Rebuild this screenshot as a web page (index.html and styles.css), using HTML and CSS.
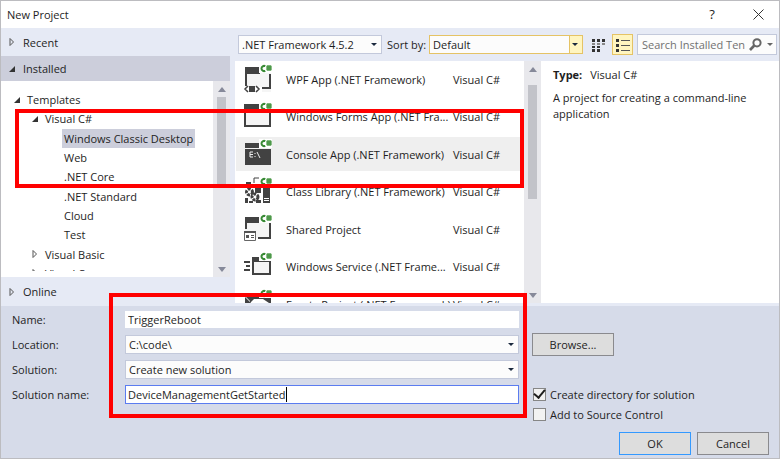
FILE: index.html
```html
<!DOCTYPE html>
<html lang="en">
<head>
<meta charset="utf-8">
<meta name="viewport" content="width=device-width, initial-scale=1">
<title>New Project</title>
<link rel="stylesheet" href="styles.css">
</head>
<body>
<svg class="defs" aria-hidden="true">
  <symbol id="cs" viewBox="0 0 13 9">
    <path d="M0 0H13V9H0Z" fill="#fff"/>
    <path d="M6.300 2.200A2.600 2.600 0 1 0 6.300 6.800" fill="none" stroke="#388a34" stroke-width="2"/>
    <path d="M7.500 1.500H12.500V6.500H7.500Z" fill="#8cc489"/>
    <path d="M9 1V7M11 1V7M7.200 3H12.800M7.200 5H12.800" fill="none" stroke="#388a34"/>
  </symbol>
</svg>
<main class="dialog">
  <header class="titlebar">
    <h1>New Project</h1>
    <button class="title-btn" aria-label="Help">?</button>
    <button class="title-btn" aria-label="Close"><svg width="11" height="11" viewBox="0 0 11 11"><path d="M.5 .5L10.5 10.5M10.5 .5L.5 10.5" stroke="#333" fill="none"/></svg></button>
  </header>

  <div class="browser">
    <nav class="sidebar">
      <button class="section"><svg class="tri" viewBox="0 0 8 8"><path d="M2 .5V7.5L5.5 4Z" fill="none" stroke="#555"/></svg>Recent</button>
      <button class="section current"><svg class="tri" viewBox="0 0 8 8"><path d="M7 1V7H1Z" fill="#333"/></svg>Installed</button>
      <div class="tree-pane">
        <div class="tree-clip">
          <ul class="tree">
            <li class="l0"><svg class="tri" viewBox="0 0 8 8"><path d="M7 1V7H1Z" fill="#333"/></svg><span>Templates</span></li>
            <li class="l1"><svg class="tri" viewBox="0 0 8 8"><path d="M7 1V7H1Z" fill="#333"/></svg><span>Visual C#</span></li>
            <li class="l2"><span class="picked">Windows Classic Desktop</span></li>
            <li class="l2"><span>Web</span></li>
            <li class="l2"><span>.NET Core</span></li>
            <li class="l2"><span>.NET Standard</span></li>
            <li class="l2"><span>Cloud</span></li>
            <li class="l2"><span>Test</span></li>
            <li class="l1"><svg class="tri" viewBox="0 0 8 8"><path d="M2 .5V7.5L5.5 4Z" fill="none" stroke="#555"/></svg><span>Visual Basic</span></li>
            <li class="l1"><svg class="tri" viewBox="0 0 8 8"><path d="M2 .5V7.5L5.5 4Z" fill="none" stroke="#555"/></svg><span>Visual C++</span></li>
          </ul>
        </div>
        <div class="scroll tree-scroll"><i class="up"></i><i class="thumb"></i><i class="down"></i></div>
      </div>
      <button class="section online"><svg class="tri" viewBox="0 0 8 8"><path d="M2 .5V7.5L5.5 4Z" fill="none" stroke="#555"/></svg>Online</button>
    </nav>

    <section class="content">
      <div class="toolbar">
        <span class="select framework"><select aria-label="Framework"><option>.NET Framework 4.5.2</option></select></span>
        <label for="sort">Sort by:</label>
        <span class="select sort"><select id="sort"><option>Default</option></select></span>
        <button class="view" aria-label="Small icons"><svg width="14" height="14" viewBox="0 0 14 14" fill="#333"><path d="M0 1H3V4H0ZM5 1H8V4H5ZM10 1H13V4H10ZM0 8H3V10H0ZM5 8H8V10H5ZM0 11H3V14H0ZM5 11H8V14H5Z"/><path d="M0 5H3V7H0ZM5 5H8V7H5ZM10 5H13V7H10Z" fill="#888"/></svg></button>
        <button class="view on" aria-label="List"><svg width="14" height="14" viewBox="0 0 14 14" fill="#333"><path d="M0 1H3V4H0ZM0 6H3V9H0ZM0 11H3V14H0Z"/><path d="M5 2H14V3H5ZM5 7H14V8H5ZM5 12H14V13H5Z" fill="#555"/></svg></button>
        <div class="search"><input type="text" aria-label="Search" placeholder="Search Installed Ten"><svg width="13" height="13" viewBox="0 0 13 13" fill="none" stroke="#666"><circle cx="8" cy="4.8" r="3.6" stroke-width="2"/><path d="M5.3 7.5L1 12" stroke-width="2.6"/></svg><i class="caret"></i></div>
      </div>
      <div class="panes">
        <div class="list-pane">
          <ul class="templates">
            <li><svg class="icon" viewBox="0 0 30 34"><path d="M2 5H28V30H2Z" fill="#f5f5f5"/><path d="M2 5H17V12H28V27H18V25H26V12H4V24H2Z" fill="#424242"/><path d="M1 25H19V31H1Z" fill="#fff"/><path d="M5 24L2 27L5 30M13 24L16 27L13 30" fill="none" stroke="#424242" stroke-width="1.5"/><path d="M6 24H12V30H6Z" fill="#424242"/><use href="#cs" x="16" y="2" width="13" height="9"/></svg><span>WPF App (.NET Framework)</span><em>Visual C#</em></li>
            <li><svg class="icon" viewBox="0 0 30 34"><path d="M2 4H28V26H2Z" fill="#f5f5f5"/><path d="M1 4H28V27H1ZM3 11V25H26V11Z" fill="#424242" fill-rule="evenodd"/><use href="#cs" x="16" y="2" width="13" height="9"/></svg><span>Windows Forms App (.NET Fra...</span><em>Visual C#</em></li>
            <li class="active"><svg class="icon" viewBox="0 0 30 34"><path d="M2 6H28V11H2ZM2 12H28V28H2Z" fill="#424242"/><path d="M10 15H7V20H10M7 17.5H10M12 16V17M12 19V20M14 15L17 21" fill="none" stroke="#eee"/><use href="#cs" x="16" y="2" width="13" height="9"/></svg><span>Console App (.NET Framework)</span><em>Visual C#</em></li>
            <li><svg class="icon" viewBox="0 0 30 34"><path d="M3 7H8V10H3ZM20 10H27V28H20ZM12 9H18V18H12Z" fill="#424242"/><path d="M11 8V3H16" fill="none" stroke="#424242"/><path d="M2 23H5V28H2ZM13 25H18V28H13Z" fill="#424242"/><path d="M21 23H26V24H21ZM21 25H26V26H21Z" fill="#fff"/><circle cx="6.500" cy="17" r="3" fill="none" stroke="#424242" stroke-width="3" stroke-dasharray="3 1"/><circle cx="12" cy="22" r="3" fill="#fff" stroke="#424242" stroke-width="3" stroke-dasharray="3 1"/><path d="M6 27H10" stroke="#424242" stroke-width="2"/><use href="#cs" x="16" y="2" width="13" height="9"/></svg><span>Class Library (.NET Framework)</span><em>Visual C#</em></li>
            <li><svg class="icon" viewBox="0 0 30 34"><path d="M2 5H28V26H2Z" fill="#f5f5f5"/><path d="M2 5H17V11H28V27H15V25H26V11H4V17H2Z" fill="#424242"/><path d="M1.500 19.500H12.500V28.500H1.500Z" fill="#fff" stroke="#666"/><path d="M1 19H13V21H1ZM3 23H6V26H3Z" fill="#555"/><path d="M8 23.500H11M8 25.500H11" stroke="#555"/><use href="#cs" x="16" y="2" width="13" height="9"/></svg><span>Shared Project</span><em>Visual C#</em></li>
            <li><svg class="icon" viewBox="0 0 30 34"><path d="M9 7H28V25H9Z" fill="#424242"/><path d="M11 12H26V23H11Z" fill="#f5f5f5"/><path d="M1 11H7V13H1ZM3 15H7V17H3ZM1 19H7V21H1Z" fill="#424242"/><use href="#cs" x="16" y="2" width="13" height="9"/></svg><span>Windows Service (.NET Frame...</span><em>Visual C#</em></li>
            <li><svg class="icon" viewBox="0 0 30 34"><path d="M3 6H17V11H28V28H26V16L20 12H11L7 16V14L3 10Z" fill="#424242"/><path d="M2 10L8 16H2Z" fill="#424242"/><use href="#cs" x="16" y="2" width="13" height="9"/></svg><span>Empty Project (.NET Framework)</span><em>Visual C#</em></li>
          </ul>
          <div class="scroll list-scroll"><i class="up"></i><i class="thumb"></i><i class="down"></i></div>
        </div>
        <aside class="details">
          <p><b>Type:</b>Visual C#</p>
          <p>A project for creating a command-line application</p>
        </aside>
      </div>
    </section>
    <div class="highlight first"></div>
  </div>

  <form class="form">
    <div class="fields">
      <label for="name">Name:</label><input class="plain" id="name" type="text" value="TriggerReboot">
      <label for="loc">Location:</label><span class="select"><select id="loc"><option>C:\code\</option></select></span>
      <label for="sol">Solution:</label><span class="select"><select id="sol"><option>Create new solution</option></select></span>
      <label for="solname">Solution name:</label><span class="focused"><input id="solname" type="text" value="DeviceManagementGetStarted"><i class="cursor"></i></span>
    </div>
    <div class="side">
      <button type="button" class="btn browse">Browse...</button>
      <label class="check"><input type="checkbox" checked>Create directory for solution</label>
      <label class="check"><input type="checkbox">Add to Source Control</label>
    </div>
    <div class="actions">
      <button type="button" class="btn ok">OK</button>
      <button type="button" class="btn">Cancel</button>
    </div>
    <div class="highlight second"></div>
  </form>
</main>
</body>
</html>
```

FILE: styles.css
```css
* { box-sizing: border-box; }
body {
  margin: 0;
  font: 11px/17px "Open Sans", "Noto Sans", sans-serif;
  color: #1e1e1e;
}
button, input, select { font: inherit; color: inherit; margin: 0; padding: 0; border: 0; border-radius: 0; background: none; }
ul, h1, p { margin: 0; padding: 0; list-style: none; }
em { font-style: normal; }
.defs { position: absolute; width: 0; height: 0; }

.dialog {
  min-height: 100vh;
  display: flex;
  flex-direction: column;
  border: 1px solid #bcbcc0;
  background: #d6dbe9;
}
.titlebar { display: flex; align-items: center; height: 27px; padding: 0 15px 0 6px; background: #fff; }
.titlebar h1 { flex: 1; font-size: 11px; font-weight: 400; }
.title-btn { width: 12px; margin-left: 34px; font-size: 13px; display: flex; justify-content: center; }

.browser { position: relative; display: flex; gap: 5px; height: 278px; background: #e6eaf5; }
.sidebar { width: 229px; display: flex; flex-direction: column; }
.section { display: flex; align-items: center; gap: 7px; height: 28px; padding: 0 7px; text-align: left; }
.section.current { height: 25px; background: #cccedb; }
.section.online { height: 29px; }
.tri { width: 8px; height: 8px; flex: none; }
.tree-pane { flex: 1; display: flex; background: #fff; }
.tree-clip { flex: 1; height: 190px; overflow: hidden; padding-top: 9px; }
.tree { display: grid; grid-template-rows: repeat(10, minmax(0, 1fr)); height: 193px; }
.tree li { display: flex; align-items: center; gap: 4px; white-space: nowrap; }
.l0 { padding-left: 12px; }
.l1 { padding-left: 30px; }
.l2 { padding-left: 61px; }
.tree span { padding: 0 2px; }
.tree .picked { background: #cccedb; line-height: 19px; }

.scroll { width: 17px; display: flex; flex-direction: column; align-items: center; background: #e8e8ec; flex: none; }
.scroll i { display: block; }
.up { border: 4px solid transparent; border-top: 0; border-bottom: 5px solid #868999; margin: 6px 0 5px; }
.down { border: 4px solid transparent; border-bottom: 0; border-top: 5px solid #868999; margin: auto 0 5px; }
.thumb { width: 9px; background: #c2c3c9; }
.tree-scroll .thumb { height: 89px; }
.list-scroll .thumb { height: 114px; margin-top: 8px; }

.content { flex: 1; min-width: 0; display: flex; flex-direction: column; }
.toolbar { display: flex; align-items: center; height: 33px; padding: 0 2px 0 3px; }
.toolbar label { margin: 0 3px 0 5px; white-space: nowrap; }
.select { position: relative; display: flex; background: #fcfcfc; border: 1px solid #c3c9db; height: 19px; }
.select select { appearance: none; width: 100%; padding: 0 18px 0 3px; outline: 0; }
.select::after, .caret { content: ""; border: 3px solid transparent; border-top-color: #1b293e; border-bottom: 0; }
.select::after { position: absolute; right: 4px; top: 7px; pointer-events: none; }
.framework { width: 144px; }
.sort { flex: 1; background: linear-gradient(to left, #fff5bf 12px, #e5c365 12px, #e5c365 13px, #fcfcfc 13px); border-color: #e5c365; }
.view { width: 21px; height: 21px; display: grid; place-items: center; margin-left: 5px; }
.view.on { background: #fff5bf; border: 1px solid #e5c365; margin: 0 4px 0 3px; }
.search { width: 140px; height: 21px; display: flex; align-items: center; padding: 0 3px 0 4px; border: 1px solid #c3c9db; background: #fcfcfc; }
.search input { flex: 1; min-width: 0; margin-right: 3px; outline: 0; }
.search input::placeholder { color: #717171; opacity: 1; }
.search svg { flex: none; }
.caret { border-top-color: #666; margin-left: 5px; }

.panes { flex: 1; display: flex; min-height: 0; padding-bottom: 3px; }
.list-pane { display: flex; width: 306px; background: #fff; overflow: hidden; }
.templates { flex: 1; display: grid; grid-template-rows: repeat(7, minmax(0, 1fr)); gap: 4px; height: 259px; padding-left: 1px; margin-top: 1px; }
.templates li { display: grid; grid-template-columns: 30px 172px 1fr; column-gap: 4px; align-items: center; padding-left: 7px; white-space: nowrap; }
.templates li span { margin-left: 9px; }
.templates .active { background: #efefef; }
.icon { width: 30px; height: 34px; }
.details { flex: 1; padding: 6px 16px 0 12px; background: #fff; }
.details p { line-height: 16px; margin-bottom: 7px; }
.details b { margin-right: 8px; }

.form {
  position: relative;
  flex: 1;
  display: grid;
  grid-template-columns: 518px 1fr;
  grid-template-rows: 103px auto;
  column-gap: 13px;
}
.fields { display: grid; grid-template-columns: 113px 1fr; grid-template-rows: repeat(4, 25px); align-items: center; padding: 1px 0 0 11px; }
.plain { height: 17px; padding: 0 3px; background: #fff; }
.focused { position: relative; display: flex; height: 19px; border: 1px solid #5b7cf0; background: #fff; }
.focused input { width: 100%; padding: 0 2px; outline: 0; }
.cursor { position: absolute; left: 160px; top: 1px; width: 1px; height: 15px; background: #000; }
.side { display: flex; flex-direction: column; padding-top: 27px; }
.btn { width: 72px; height: 23px; border: 1px solid #8a8a8e; background: #ddd; }
.btn.browse { width: 82px; margin-bottom: 28px; flex: none; }
.btn.ok { border-color: #3399ff; }
.check { display: flex; align-items: center; gap: 4px; height: 20px; padding-left: 1px; flex: none; }
.check input { appearance: none; width: 13px; height: 13px; border: 1px solid #868686; background: #f2f2f2; display: grid; place-items: center; }
.check input:checked::after { content: ""; width: 5px; height: 9px; border: solid #1e1e1e; border-width: 0 2px 2px 0; transform: rotate(40deg); margin-top: -3px; }
.actions { grid-column: 1 / -1; display: flex; justify-content: flex-end; gap: 6px; padding: 23px 10px 3px 0; }

.highlight { position: absolute; border: 4px solid #f00; pointer-events: none; }
.first { left: 14px; top: 81px; width: 509px; height: 79px; }
.second { left: 108px; top: -13px; width: 418px; height: 125px; }
```
